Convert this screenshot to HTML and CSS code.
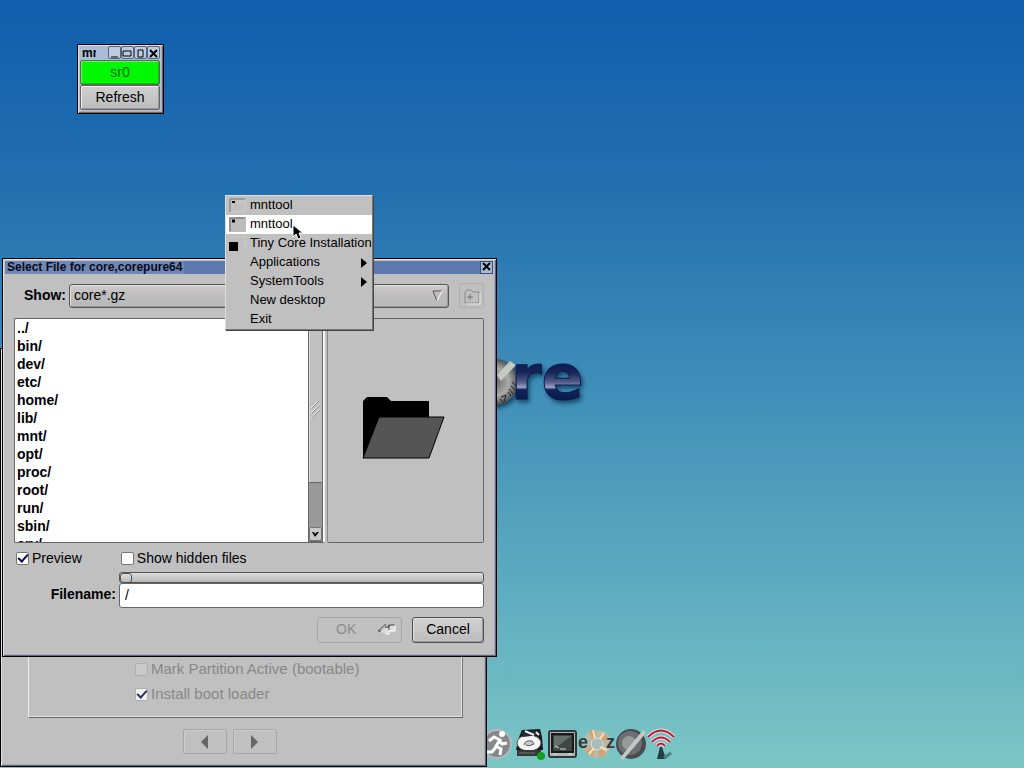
FILE: index.html
```html
<!DOCTYPE html>
<html lang="en">
<head>
<meta charset="utf-8">
<title>Tiny Core desktop</title>
<link rel="stylesheet" href="styles.css">
</head>
<body>
<main class="desktop">
  <svg class="logo" width="110" height="80" viewBox="0 0 110 80" role="img" aria-label="Core">
    <defs>
      <linearGradient id="logoFill" gradientUnits="userSpaceOnUse" x1="0" y1="24" x2="0" y2="62">
        <stop offset="0" stop-color="#0b1c50"/><stop offset=".25" stop-color="#17265a"/>
        <stop offset=".5" stop-color="#535a86"/><stop offset=".64" stop-color="#9aa2c8"/>
        <stop offset=".7" stop-color="#142458"/><stop offset="1" stop-color="#081844"/>
      </linearGradient>
      <radialGradient id="ball"><stop offset="0" stop-color="#666"/><stop offset=".6" stop-color="#aaa"/><stop offset="1" stop-color="#4c5052"/></radialGradient>
    </defs>
    <circle cx="13" cy="43" r="23" fill="url(#ball)"/>
    <path d="M15 36l13-14 6 4-15 16z" fill="#c6c8c3"/>
    <path d="M19 58l5-2-2 7m4-10l3 4m-2-7l4 5m-2-8l4 4m-3-8l4 4m-16 13l4 4" stroke="#222" fill="none"/>
    <text class="logo-text" x="29" y="60">re</text>
  </svg>

  <nav class="dock" aria-label="Applications">
    <button class="launcher" aria-label="Exit"><svg width="32" height="34" viewBox="0 0 32 34"><circle cx="13" cy="17" r="14" fill="#85888a" stroke="#b8b9bb" stroke-width="2"/><circle cx="18" cy="7" r="3" fill="#fff"/><path d="M5 14l5-4 6 3-4 6 5 3-1 6M12 20l-4 5H3M15 13l3 4 5-1" fill="none" stroke="#fff" stroke-width="3"/></svg></button>
    <button class="launcher" aria-label="Disk mounts"><svg width="32" height="34" viewBox="0 0 32 34"><path d="M5 3l18-1 2 8 1 13H-1L2 10z" fill="#15181b"/><ellipse cx="12" cy="16" rx="12" ry="8" fill="#f4f4f4" stroke="#555"/><path d="M4 4l8 1 5-2 4 5-7 1-8 1z" fill="#222b33"/><path d="M8 4l9 4M19 5l3 3" stroke="#eee" stroke-width="2"/><path d="M7 18q1-5 8-4l2 3q-5 3-8 1" fill="#ccc" stroke="#555"/><path d="M0 23h24v6H0z" fill="#353739"/><path d="M2 26h16" stroke="#777"/><circle cx="24" cy="29" r="4" fill="#129c22"/></svg></button>
    <button class="launcher" aria-label="Terminal"><svg width="32" height="34" viewBox="0 0 32 34"><rect x="-1" y="4" width="27" height="26" rx="2" fill="#b2b5b4" stroke="#30383a" stroke-width="2"/><path d="M2 7h21v18H2z" fill="#414744" stroke="#161a1a" stroke-width="2"/><path d="M4 9h17L4 22z" fill="#68706e"/><path d="M5 19l4 2m1 1h6M3 27h4m11 0h4" stroke="#ddd"/></svg></button>
    <button class="launcher ezremaster" aria-label="ezremaster"><svg width="32" height="34" viewBox="0 0 32 34"><circle cx="14" cy="17" r="14" fill="#b9bba9"/><path d="M10 17L6 4l7-1 1 14L21 5l5 7-12 5 10 10-8 4-2-14-4 13-8-5z" fill="#d0a477"/><circle cx="14" cy="17" r="6" fill="#a7bdbb" stroke="#ddd"/><path d="M10 3l2 8m9-5l-4 6m7 11l-7-3M6 27l5-6" stroke="#eee0c5" stroke-width="2"/></svg><span><b>e</b><b>z</b></span></button>
    <button class="launcher" aria-label="Core apps"><svg width="32" height="34" viewBox="0 0 32 34"><circle cx="15" cy="17" r="15" fill="#494d4e"/><circle cx="14" cy="16" r="12" fill="#6d7072"/><circle cx="13" cy="16" r="7" fill="#999b9b"/><path d="M4 31l3 2L30 6l-3-3z" fill="#c4c8c7"/></svg></button>
    <button class="launcher" aria-label="Wi-Fi"><svg width="32" height="34" viewBox="0 0 32 34"><g fill="none" stroke="#f0dcdc" stroke-width="4"><path d="M3 10q13-13 26 0M7 15q9-9 18 0M12 19q4-5 8 0"/></g><g fill="none" stroke="#b51e35" stroke-width="2"><path d="M3 10q13-13 26 0M7 15q9-9 18 0M12 19q4-5 8 0"/></g><path d="M15 20h2l4 12H12z" fill="#243c42"/><path d="M19 31l7-5" stroke="#4f7e82" stroke-width="3"/></svg></button>
  </nav>

  <section class="window mount-window" aria-label="mnttool">
    <header class="mount-title"><span class="mount-name">mnttool</span><span class="window-buttons">
      <button aria-label="Shade"><svg width="13" height="12"><path d="M3 10h7" stroke="#000"/></svg></button>
      <button aria-label="Minimize"><svg width="13" height="12"><path d="M2 4h8v5H2z" fill="none" stroke="#000"/></svg></button>
      <button aria-label="Maximize"><svg width="13" height="12"><path d="M4 3h5v7H4z" fill="none" stroke="#000"/></svg></button>
      <button aria-label="Close"><svg width="13" height="12"><path d="M3 3l7 7m0-7l-7 7" stroke="#000" stroke-width="2"/></svg></button>
    </span></header>
    <button class="mount-button mounted">sr0</button>
    <button class="mount-button">Refresh</button>
  </section>

  <section class="window install-window" aria-label="Tiny Core Installation">
    <div class="install-options">
      <label><input type="checkbox" disabled>Mark Partition Active (bootable)</label>
      <label><input type="checkbox" checked disabled>Install boot loader</label>
    </div>
    <div class="install-nav">
      <button disabled aria-label="Back"><svg width="12" height="16"><path d="M9 1v14L2 8z" fill="#666"/></svg></button>
      <button disabled aria-label="Next"><svg width="12" height="16"><path d="M2 1v14l7-7z" fill="#666"/></svg></button>
    </div>
  </section>

  <section class="window file-window" role="dialog" aria-labelledby="dialog-title">
    <header class="title-bar"><h1 id="dialog-title">Select File for core,corepure64</h1><button class="close" aria-label="Close"><svg width="12" height="12"><path d="M2 2l7 7m0-7l-7 7" stroke="#000" stroke-width="2"/></svg></button></header>
    <form class="file-form">
      <div class="show-row">
        <label for="show">Show:</label>
        <div class="select-wrap"><select id="show"><option>core*.gz</option></select><svg class="arrow" width="13" height="14"><path d="M2 2h9" stroke="#555"/><path d="M2 2l4 10" stroke="#555"/><path d="M11 2L6 12" stroke="#fff"/></svg></div>
        <button type="button" class="new-folder" disabled aria-label="New folder"><svg width="20" height="18"><path d="M3 16V5l2-2h4l2 2h6v11H3z" fill="none" stroke="#898989"/><path d="M4 17h14V6" fill="none" stroke="#e8e8e8"/><path d="M5 10h6M8 7v6" stroke="#707070"/></svg></button>
      </div>
      <div class="browser">
        <div class="list-box">
          <ul><li>../</li><li>bin/</li><li>dev/</li><li>etc/</li><li>home/</li><li>lib/</li><li>mnt/</li><li>opt/</li><li>proc/</li><li>root/</li><li>run/</li><li>sbin/</li><li>srv/</li></ul>
          <div class="scrollbar"><div class="thumb"><svg width="11" height="20"><path d="M1 8l7-7M1 13l9-9M1 18l9-9" stroke="#eee"/><path d="M2 8l7-7M2 13l8-8M2 18l8-8" stroke="#8e8e8e"/></svg></div><button type="button" aria-label="Scroll down"><svg width="9" height="7"><path d="M1 1h2l1 2 2-2h2L4 6z"/></svg></button></div>
        </div>
        <div class="preview"><svg width="84" height="66" viewBox="0 0 84 66" role="img" aria-label="Folder"><path d="M1 63V5l4-4h20l4 4h38v17H18z"/><path d="M17 21h65L67 62H1z" fill="#555" stroke="#000"/></svg></div>
      </div>
      <div class="checks"><label><input type="checkbox" checked>Preview</label><label><input type="checkbox">Show hidden files</label></div>
      <div class="filename-row"><label for="filename">Filename:</label><div class="name-fields"><input class="path-slider" type="range" value="0" aria-label="Path"><input id="filename" type="text" value="/"></div></div>
      <div class="actions">
        <button type="button" disabled class="ok"><span>OK</span><svg width="20" height="14"><path d="M9 6h3V3h6v6h-6v3H9L3 10z" fill="#ddd"/><path d="M1 9l8-7M8 5h4V3h6M12 3v5M1 9h3" fill="none" stroke="#444"/><path d="M18 3v6h-6v3H9" fill="none" stroke="#fff"/></svg></button>
        <button type="button" class="cancel">Cancel</button>
      </div>
    </form>
  </section>

  <div class="menu" role="menu">
    <button role="menuitem"><svg class="thumb-icon" width="17" height="15"><path d="M1 14V1h15" fill="none" stroke="#777"/><path d="M8 3h8v11H2" fill="none" stroke="#ccc"/><path d="M3 4h3" stroke="#000" stroke-width="2"/></svg><span>mnttool</span></button>
    <button role="menuitem" class="current"><svg class="thumb-icon" width="17" height="15"><path d="M0 0h17v15H0z" fill="#bbb"/><path d="M1 14V1h15" fill="none" stroke="#666"/><path d="M3 4h3" stroke="#000" stroke-width="3"/></svg><span>mnttool</span></button>
    <button role="menuitem"><svg class="thumb-icon" width="17" height="15"><path d="M1 1h15v13" fill="none" stroke="#ccc"/><path d="M0 6h9v9H0z"/></svg><span>Tiny Core Installation</span></button>
    <button role="menuitem"><i></i><span>Applications</span><svg class="submenu" width="6" height="10"><path d="M0 0v10l6-5z"/></svg></button>
    <button role="menuitem"><i></i><span>SystemTools</span><svg class="submenu" width="6" height="10"><path d="M0 0v10l6-5z"/></svg></button>
    <button role="menuitem"><i></i><span>New desktop</span></button>
    <button role="menuitem"><i></i><span>Exit</span></button>
  </div>
  <svg class="cursor" width="11" height="17"><path d="M1 1v12l3-3 2 5 3-1-2-5h4z" stroke="#fff" stroke-width="1"/></svg>
</main>
</body>
</html>
```
FILE: styles.css
```css
* { box-sizing: border-box; }
body { margin: 0; font: 14px/18px "Liberation Sans", Arial, sans-serif; color: #000; }
button, input, select { font: inherit; color: inherit; margin: 0; }
button { padding: 0; border: 0; background: none; }
svg { display: block; flex-shrink: 0; overflow: visible; }
.desktop { position: relative; min-height: 100vh; overflow: hidden; background: linear-gradient(#105eac 0%, #226faf 24%, #408fb9 51%, #5dabc0 76%, #7cc6c5 100%); }

.window { position: absolute; background: #c0c0c0; border: 1px solid #000; box-shadow: inset 1px 1px #e0e0e4, inset -1px -1px #646474, inset -2px -2px #aaaac0; }
.logo { position: absolute; left: 482px; top: 339px; filter: drop-shadow(2px 3px 2px #17496b); }
.logo-text { font: bold 62px "DejaVu Sans", sans-serif; fill: url(#logoFill); stroke: #0b1c50; stroke-width: 1px; }

.dock { position: absolute; left: 484px; bottom: 7px; display: flex; gap: 1px; }
.dock .launcher:last-child { margin-left: -4px; }
.launcher { position: relative; width: 32px; height: 34px; }
.ezremaster span { position: absolute; inset: 6px 0 auto -5px; display: flex; justify-content: space-between; font-size: 18px; line-height: 18px; color: #343b40; }

.mount-window { left: 77px; top: 44px; width: 87px; padding: 1px 3px 3px 2px; }
.mount-title { display: flex; justify-content: space-between; height: 14px; background: #a9bbd5; font-size: 12px; line-height: 14px; font-weight: bold; }
.mount-name { width: 14px; margin-left: 2px; overflow: hidden; }
.window-buttons { display: flex; }
.window-buttons button { width: 13px; height: 13px; border: 1px solid #536483; border-radius: 2px; background: #bdcbe0; overflow: hidden; }
.window-buttons svg { margin: -1px; }
.mount-button { display: block; width: 100%; height: 25px; padding-bottom: 2px; border: 1px solid #646464; border-radius: 2px; box-shadow: inset 1px 1px #eee, inset -1px -1px #999; background: linear-gradient(#d0d0d0, #bcbcbc); }
.mounted { background: #00f900; color: #086c08; box-shadow: inset 1px 1px #52ff52, inset -1px -1px #00c900; }

.install-window { left: 0; top: 348px; width: 487px; height: 419px; display: flex; flex-direction: column; justify-content: flex-end; padding: 0 23px 12px 27px; }
.install-options { display: flex; flex-direction: column; justify-content: flex-end; gap: 7px; height: 330px; padding: 0 0 14px 106px; border: 1px solid #777; border-left-color: #eee; border-bottom-color: #666; box-shadow: inset -1px -1px #e2e2e2; color: #888; font-size: 15px; }
.install-options input { opacity: 0.8; }
.install-options label:first-child input { background: #ccc; border-color: #aaa; }
.install-options label:last-child input { border-color: #aaa; }
.install-nav { display: flex; gap: 6px; padding: 11px 0 0 155px; }
.install-nav button { display: grid; place-items: center; width: 44px; height: 25px; border: 1px solid #a6a6a6; border-radius: 2px; box-shadow: inset 1px 1px #ccc; }

label { display: flex; align-items: center; }
input[type="checkbox"] { appearance: none; display: grid; place-items: center; width: 13px; height: 13px; margin: 0 3px 0 0; border: 1px solid #777; border-radius: 2px; background: #fff; }
input[type="checkbox"]:checked::after { content: ""; width: 8px; height: 4px; margin-top: -3px; border: solid #08085c; border-width: 0 0 2px 2px; transform: rotate(-48deg); }

.file-window { left: 2px; top: 258px; width: 495px; padding: 2px 3px 0 2px; height: 399px; }
.title-bar { display: flex; justify-content: space-between; height: 13px; background: #5e7bb1; }
h1 { margin: 0; padding: 0 2px; font-size: 12px; line-height: 12px; background: #7188b3; color: #050b24; white-space: nowrap; }
.close { width: 13px; height: 13px; background: #a9bbd5; border: 1px solid #334c80; }
.close svg { margin-top: -1px; }
.file-form { padding: 9px 9px 0; }
.show-row { display: flex; align-items: center; gap: 3px; }
.show-row > label { width: 52px; justify-content: flex-end; font-weight: bold; padding-bottom: 1px; }
.select-wrap { position: relative; flex: 1; }
select { appearance: none; display: block; width: 100%; height: 24px; padding: 0 4px 2px; border: 1px solid #555; border-radius: 3px; background: linear-gradient(#d4cccc, #bebebe 40%, #b8b8b8); box-shadow: inset 1px 1px #ddd, inset -1px -1px #999; }
.arrow { position: absolute; right: 5px; top: 5px; }
.new-folder { display: grid; place-items: center; width: 25px; height: 25px; margin-left: 7px; border: 1px solid #b2acac; border-radius: 2px; }
.browser { display: flex; gap: 2px; height: 225px; margin-top: 10px; }
.list-box { flex: 2; display: flex; padding-right: 1px; border: 1px solid #666; border-right-color: #eee; border-radius: 2px; background: #fff; overflow: hidden; }
ul { flex: 1; margin: 0; padding: 0 2px; list-style: none; font-weight: bold; overflow: hidden; }
.scrollbar { display: flex; flex-direction: column; width: 15px; background: #999; border: 1px solid #666; }
.thumb { height: 163px; padding: 80px 0 0 1px; background: #c0c0c0; border-bottom: 1px solid #666; box-shadow: inset 1px 0 #ddd; }
.scrollbar button { display: grid; place-items: center; width: 13px; height: 14px; margin-top: auto; border: 1px solid #777; border-radius: 2px; background: #c8c8c8; }
.preview { flex: 0 0 157px; display: grid; place-items: center; border: 1px solid #666; border-left-color: #888; border-radius: 2px; padding: 0 3px 3px 0; }
.checks { display: flex; gap: 39px; padding: 6px 2px 0; }
.filename-row { display: flex; gap: 3px; padding-top: 5px; }
.filename-row > label { width: 102px; justify-content: flex-end; padding-top: 7px; font-weight: bold; }
.name-fields { display: flex; flex: 1; flex-direction: column; }
.path-slider { appearance: none; width: 100%; height: 11px; border: 1px solid #555; border-radius: 3px; background: linear-gradient(#ddd, #b8b8b8); }
.path-slider::-webkit-slider-thumb { appearance: none; width: 12px; height: 10px; border: 1px solid #555; border-radius: 3px; background: linear-gradient(#ddd, #b8b8b8); }
#filename { width: 100%; height: 25px; padding: 0 5px 2px; border: 1px solid #666; border-radius: 3px; background: #fff; }
.actions { display: flex; justify-content: flex-end; gap: 10px; padding-top: 9px; }
.actions button { height: 26px; padding-bottom: 2px; border: 1px solid #505050; border-radius: 3px; }
.cancel { width: 72px; background: linear-gradient(#d2d2d2, #bcbcbc); box-shadow: inset 1px 1px #ddd, inset -1px -1px #999; }
.actions .ok { display: flex; align-items: center; justify-content: space-between; width: 85px; padding: 0 4px 2px 18px; border-color: #a6a6a6; color: #8c8c8c; }

.menu { position: absolute; left: 225px; top: 195px; width: 148px; background: #c0c0c0; border: 1px solid #777; border-top-color: #ddd; border-left-color: #ddd; box-shadow: 1px 1px #444; }
.menu button { display: grid; grid-template-columns: 17px 1fr 6px; column-gap: 4px; align-items: center; width: 100%; height: 19px; padding: 0 5px 0 3px; font-size: 13px; line-height: 15px; text-align: left; white-space: nowrap; }
.menu span { padding-bottom: 2px; }
.menu .current { background: #fff; }
.cursor { position: absolute; left: 292px; top: 224px; }
```
